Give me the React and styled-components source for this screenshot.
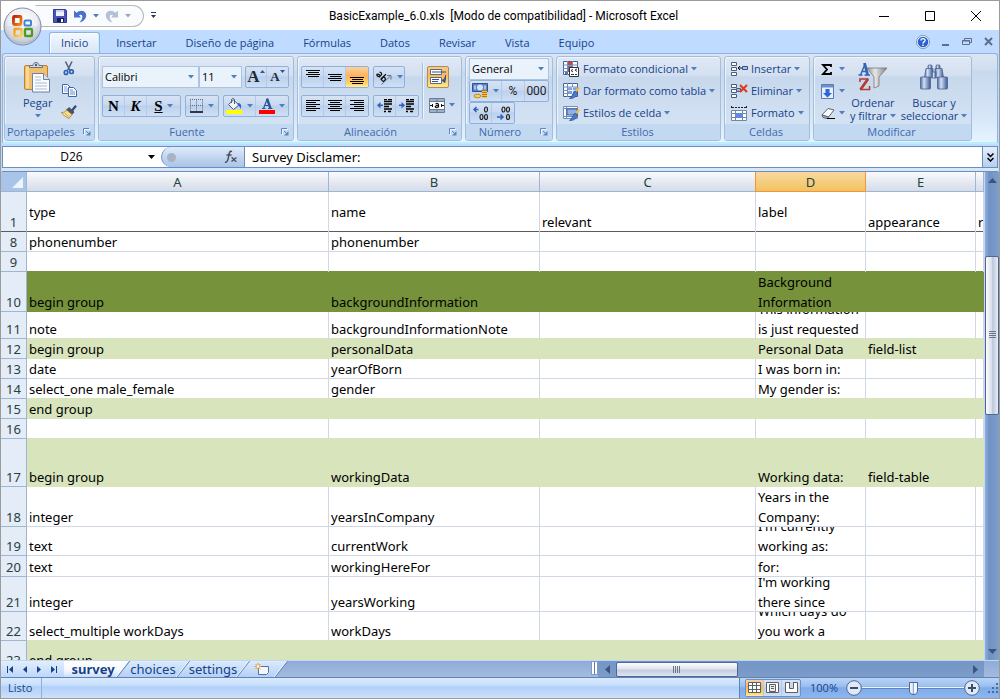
import React from "react";
import styled, { createGlobalStyle, css } from "styled-components";

const UI_FONT = `"Open Sans", "Noto Sans", sans-serif`;
const CELL_FONT = `"Noto Sans", "Open Sans", sans-serif`;

const GlobalStyle = createGlobalStyle`
  *, *::before, *::after { box-sizing: border-box; }
  body { margin: 0; background: #9db5dc; }
  button, input, select { font: inherit; color: inherit; margin: 0; padding: 0; border: 0; background: none; border-radius: 0; }
  button { cursor: pointer; }
  svg { display: block; flex: none; }
`;

const Window = styled.div`
  height: 100vh;
  display: flex;
  flex-direction: column;
  overflow: hidden;
  border: 1px solid #9a9a9a;
  background: #bfdbff;
  font: 11px/16px ${UI_FONT};
  color: #15428b;
`;

/* ---------- title bar ---------- */

const TitleBar = styled.header`
  position: relative;
  display: flex;
  align-items: center;
  height: 29px;
  flex: none;
  background: #fff;
  color: #000;
`;

const TitleSide = styled.div`
  flex: 1;
  display: flex;
  align-items: center;
  justify-content: ${(p) => (p.$end ? "flex-end" : "flex-start")};
  gap: ${(p) => (p.$end ? "34px" : "6px")};
  padding: ${(p) => (p.$end ? "0 17px 0 0" : "0 0 0 34px")};
`;

const Title = styled.h1`
  margin: 0;
  padding-right: 10px;
  font: 12px/16px Roboto, ${UI_FONT};
  white-space: pre;
`;

const OfficeButton = styled.button`
  position: absolute;
  left: 2px;
  top: 6px;
  z-index: 2;
`;

const QuickAccess = styled.div`
  display: flex;
  align-items: center;
  gap: 6px;
  height: 22px;
  padding: 0 12px 0 17px;
  border: 1px solid #b4b9c2;
  border-left-color: transparent;
  border-radius: 0 11px 11px 0;
  background: #fafbfd;
`;

const IconButton = styled.button`
  display: flex;
  align-items: center;
  justify-content: center;
`;

/* ---------- ribbon ---------- */

const TabRow = styled.nav`
  display: flex;
  align-items: flex-end;
  gap: 1px;
  height: 23px;
  flex: none;
  padding: 0 5px 0 48px;
`;

const RibbonTab = styled.button`
  height: 21px;
  padding: 0 14px;
  ${(p) =>
    p.$active &&
    css`
      padding: 0 11px;
      margin-right: 1px;
      border: 1px solid #8db2e3;
      border-bottom: 0;
      border-radius: 3px 3px 0 0;
      background: linear-gradient(#f4f9ff, #e3edf9 60%, #dbe6f4);
      box-shadow: inset 1px 1px #fff, inset -1px 0 #bff4ff;
    `}
`;

const TabTools = styled.div`
  display: flex;
  align-items: center;
  align-self: center;
  gap: 12px;
  margin-left: auto;
`;

const Ribbon = styled.section`
  display: flex;
  gap: 3px;
  flex: none;
  height: 91px;
  margin: 0 1px;
  padding: 2px 1px;
  border: 1px solid #8db2e3;
  border-bottom: 2px solid #bcecff;
  border-radius: 3px;
  background: linear-gradient(#dbe6f4, #cfdeef 18%, #c8d9ee 20%, #d6e6f7 70%, #e5f4ff);
`;

const GroupFrame = styled.section`
  display: flex;
  flex-direction: column;
  flex: none;
  width: ${(p) => p.$width}px;
  height: 85px;
  border: 1px solid #a3bddc;
  border-radius: 3px;
  overflow: hidden;
  background: linear-gradient(#dfe8f5, #d4e0f0 22%, #c8d8ec 24%, #d3e2f3 80%);
  box-shadow: inset 1px 1px rgba(255, 255, 255, 0.6);
`;

const GroupBody = styled.div`
  display: flex;
  flex: 1;
  gap: ${(p) => p.$gap || 0}px;
  padding: ${(p) => p.$pad || "9px 3px 0"};
`;

const GroupLabel = styled.h2`
  display: flex;
  align-items: center;
  gap: 8px;
  height: 16px;
  margin: 0;
  padding: 0 4px 0 2px;
  font: inherit;
  line-height: 16px;
  color: #3e6aaa;
  background: #c2d9f1;
`;

const LabelText = styled.span`
  flex: 1;
  text-align: center;
`;

const Column = styled.div`
  display: flex;
  flex-direction: column;
  align-items: ${(p) => p.$align || "flex-start"};
  gap: ${(p) => p.$gap || 0}px;
  padding-top: ${(p) => p.$top || 0}px;
`;

const Row = styled.div`
  display: flex;
  align-items: center;
  gap: ${(p) => p.$gap || 0}px;
`;

const ButtonStrip = styled.div`
  display: flex;
  height: 22px;
  border: 1px solid #8fb0dc;
  border-radius: 2px;
  background: linear-gradient(#d6e3f4, #c8d9f0 45%, #bbd0ec 50%, #cfe0f5);
`;

const StripButton = styled.button`
  display: flex;
  align-items: center;
  justify-content: center;
  gap: 4px;
  width: ${(p) => p.$w || 22}px;
  height: 20px;
  &:not(:last-child) { border-right: 1px solid #b3cbea; }
  ${(p) => p.$digits && css`color: #222; font-size: 12px; font-family: "Roboto", sans-serif;`}
  ${(p) => p.$on && css`background: linear-gradient(#f9d2a0, #ffb35a 45%, #ffd25f 80%, #ffec9c);`}
`;

const ToggleButton = styled.button`
  display: flex;
  align-items: center;
  justify-content: center;
  width: 22px;
  height: 22px;
  && { border: 1px solid #b58b50; border-radius: 2px; }
  background: linear-gradient(#f6c98e, #fdb75c 40%, #ffd873 80%, #ffe996);
`;

const Divider = styled.span`
  width: 2px;
  height: 56px;
  margin-top: -3px;
  border-left: 1px solid #a3bddc;
  border-right: 1px solid #edf4fc;
`;

const Combo = styled.span`
  display: grid;
  align-items: center;
  width: ${(p) => p.$w}px;
  height: 22px;
  border: 1px solid #abc4e4;
  background: #eaf2fb;
  color: #000;
  > * { grid-area: 1 / 1; }
  select { appearance: none; width: 100%; height: 20px; padding-left: 2px; outline: 0; }
  svg { justify-self: end; margin-right: 4px; pointer-events: none; }
`;

const LineButton = styled.button`
  display: flex;
  align-items: center;
  justify-content: space-between;
  height: 22px;
  min-width: 24px;
  gap: 3px;
  white-space: nowrap;
`;

const BigButton = styled.button`
  display: flex;
  flex-direction: column;
  align-items: center;
  line-height: 13px;
  white-space: nowrap;
`;

const BigIcon = styled.span`
  display: flex;
  align-items: center;
  height: 38px;
`;

const CaretLine = styled.span`
  display: flex;
  align-items: center;
  gap: 3px;
  height: 13px;
`;

/* ---------- formula bar ---------- */

const FormulaBar = styled.section`
  display: flex;
  flex: none;
  height: 22px;
  margin: 2px 1px 0;
  border: 1px solid #6a8fbd;
  background: #fff;
  color: #000;
  font-size: 12px;
`;

const NameBox = styled.div`
  display: flex;
  align-items: center;
  width: 158px;
  padding-right: 6px;
  gap: 8px;
  input { flex: 1; min-width: 0; text-align: center; outline: 0; }
`;

const FunctionPill = styled.div`
  display: flex;
  align-items: center;
  justify-content: space-between;
  width: 84px;
  padding: 0 6px 0 5px;
  border: 1px solid #6a8fbd;
  border-width: 0 1px 0 1px;
  border-radius: 10px 0 0 10px;
  background: linear-gradient(#dfebfa, #c3d6f0 50%, #a9c4ea);
`;

const FormulaInput = styled.input`
  flex: 1;
  min-width: 0;
  && { padding: 0 7px; font: 13px/20px ${CELL_FONT}; outline: 0; }
`;

const ExpandButton = styled(IconButton)`
  width: 15px;
  && { border-left: 1px solid #6a8fbd; background: linear-gradient(#e6f0fc, #b5cef0); }
`;

const FormulaGap = styled.div`
  flex: none;
  height: 4px;
  margin: 0 1px;
  background: #d8e6f7;
  border-bottom: 1px solid #6a8fbd;
`;

/* ---------- grid ---------- */

const SheetArea = styled.main`
  display: flex;
  flex: 1;
  min-height: 0;
`;

const SheetView = styled.div`
  flex: 1;
  min-width: 0;
  overflow: hidden;
  background: #fff;
`;

const Grid = styled.table`
  width: 100%;
  min-width: 982px;
  table-layout: fixed;
  border-collapse: separate;
  border-spacing: 0;
  font: 13px/20px ${CELL_FONT};
  color: #000;
  td, th { padding: 0; font-weight: 400; }
`;

const ColumnHead = styled.th`
  height: 20px;
  color: #27413e;
  border-right: 1px solid #9eb6ce;
  box-shadow: inset 0 -1px #9eb6ce;
  background: linear-gradient(#f9fbfd, #e5e9f1 50%, #d3dbe8);
  ${(p) =>
    p.$selected &&
    css`
      border-color: #f29536;
      background: linear-gradient(#f9d99f, #f1c15f);
      box-shadow: -1px 0 #f29536, inset 0 -1px #f29536;
    `}
`;

const Corner = styled.th`
  border-right: 1px solid #9eb6ce;
  box-shadow: inset 0 -1px #9eb6ce;
  background: #a9c4e9;
  svg { margin: 2px 3px 2px auto; }
`;

const RowHead = styled.th`
  vertical-align: bottom;
  color: #27413e;
  background: #e4ecf7;
  border-right: 1px solid #9eb6ce;
  box-shadow: inset 0 -1px ${(p) => (p.$frozen ? "#5c5c5c" : "#9eb6ce")};
`;

const FILLS = { dark: "#76933c", light: "#d8e4bc" };

const Cell = styled.td`
  background: ${(p) => FILLS[p.$fill] || "#fff"};
  border-right: 1px solid ${(p) => FILLS[p.$fill] || "#d0d7e5"};
  box-shadow: inset 0 -1px ${(p) => (p.$frozen ? "#5c5c5c" : FILLS[p.$fill] || FILLS[p.$below] || "#d0d7e5")};
`;

const CellText = styled.div`
  display: flex;
  align-items: ${(p) => (p.$middle ? "center" : "flex-end")};
  height: ${(p) => p.$h}px;
  padding-left: 2px;
  overflow: hidden;
  white-space: pre;
`;

const VScroll = styled.div`
  display: flex;
  flex-direction: column;
  flex: none;
  width: 15px;
  border-left: 1px solid #c3d7f2;
  background: linear-gradient(90deg, #8fb0e0, #6f92c2 30%, #7f9fcc);
`;

const VTrack = styled.div`
  flex: 1;
  display: flex;
  flex-direction: column;
  &::before { content: ""; flex: 67; }
  &::after { content: ""; flex: 229; }
`;

const VThumb = styled.div`
  flex: 158;
  display: flex;
  align-items: center;
  justify-content: center;
  border: 1px solid #4e6797;
  border-radius: 2px;
  background: linear-gradient(90deg, #fdfdfe, #d5dbe8 50%, #bcc7db 55%, #e8edf5);
`;

const ScrollButton = styled(IconButton)`
  flex: none;
  width: ${(p) => p.$w || 15}px;
  height: 17px;
`;

/* ---------- sheet tabs ---------- */

const TabStrip = styled.footer`
  display: flex;
  flex: none;
  height: 17px;
  padding-right: 15px;
  border-top: 1px solid #c3d7f2;
  background: linear-gradient(#8fabd8, #a3bbdf);
`;

const SheetNav = styled.div`
  display: flex;
  align-items: center;
  justify-content: space-around;
  width: 63px;
  padding: 0 1px;
  background: linear-gradient(#e2eefc, #bdd7fa);
`;

const SheetTabs = styled.div`
  display: flex;
  overflow: hidden;
  padding-right: 10px;
`;

const SheetTab = styled.button`
  position: relative;
  width: ${(p) => p.$w || 60}px;
  height: 16px;
  z-index: ${(p) => (p.$active ? 1 : 0)};
  && { padding-right: 2px; font: ${(p) => (p.$active ? 700 : 400)} 13px/16px ${CELL_FONT}; }
  &::before {
    content: "";
    position: absolute;
    inset: 0 0 0 ${(p) => (p.$active ? "-12px" : "0")};
    border-right: 1px solid #5f85bd;
    transform: skewX(-38deg);
    background: ${(p) => (p.$active ? "linear-gradient(#fff, #f4f8fe 60%, #c9dcf5)" : "linear-gradient(#dcebfd, #b4d0f6)")};
    box-shadow: inset -1px 0 #fff;
  }
  > span { position: relative; display: flex; justify-content: center; }
`;

const SplitHandle = styled.span`
  flex: none;
  width: 7px;
  height: 14px;
  margin-left: auto;
  border: 1px solid #7b9bca;
  background: linear-gradient(90deg, #fff 2px, #5f7eb0 2px, #5f7eb0 3px, #fff 3px);
`;

const HScroll = styled.div`
  display: flex;
  align-items: center;
  flex: 0 1 386px;
  background: linear-gradient(#7496c6, #7c9cc8);
`;

const HTrack = styled.div`
  flex: 1;
  display: flex;
  &::after { content: ""; flex: 229; }
`;

const HThumb = styled.div`
  flex: 121;
  height: 15px;
  display: flex;
  align-items: center;
  justify-content: center;
  border: 1px solid #4e6797;
  border-radius: 2px;
  background: linear-gradient(#fdfdfe, #dfe4ee 45%, #c3ccdd 55%, #dfe5f0);
`;

const Grip = styled.span`
  width: ${(p) => (p.$vertical ? 7 : 8)}px;
  height: ${(p) => (p.$vertical ? 8 : 7)}px;
  background: repeating-linear-gradient(${(p) => (p.$vertical ? "180deg" : "90deg")}, #6f7683 0 1px, transparent 1px 2px);
`;

/* ---------- status bar ---------- */

const StatusBar = styled.footer`
  display: flex;
  align-items: center;
  flex: none;
  height: 21px;
  border-top: 1px solid #5f83b8;
  background: linear-gradient(#dcebfe, #c6defc 35%, #b1d0f8 45%, #cce0fb);
`;

const StatusText = styled.span`
  align-self: stretch;
  display: flex;
  align-items: center;
  padding: 0 9px 0 7px;
  border-right: 1px solid #8cb0e2;
`;

const StatusTools = styled.div`
  display: flex;
  align-items: center;
  align-self: stretch;
  margin-left: auto;
  padding-left: 5px;
  border-left: 1px solid #5f83b8;
  background: linear-gradient(#b9d3f7, #9dc0f0 40%, #80acea 50%, #8fb5ee);
`;

const ViewStrip = styled(ButtonStrip)`
  height: 18px;
  margin-right: 9px;
  border-color: #6c90c6;
`;

const ViewButton = styled(StripButton)`
  width: 18px;
  height: 16px;
`;

const ZoomRange = styled.input`
  appearance: none;
  width: 102px;
  height: 18px;
  margin: 0;
  && { background: linear-gradient(transparent 8px, #e9f2fd 8px, #e9f2fd 9px, #6186bd 9px, #6186bd 10px, transparent 10px); }
  &::-webkit-slider-thumb {
    appearance: none;
    width: 9px;
    height: 13px;
    border: 1px solid #4a689e;
    border-radius: 1px 1px 5px 5px;
    background: linear-gradient(90deg, #fff, #d2def0 40%, #8fa8cf 50%, #f4f8fd 60%);
  }
`;

/* ---------- icons ---------- */

const Caret = ({ color = "#4f7fbe" }) => (
  <svg width="6" height="4" viewBox="0 0 6 4" aria-hidden="true"><path d="M0 0h6L3 3.500z" fill={color} /></svg>
);

const Launcher = () => (
  <svg width="8" height="8" viewBox="0 0 8 8" aria-hidden="true">
    <path d="M.5 6V.5H6" fill="none" stroke="#5f87bf" />
    <path d="M3 3l3 3" stroke="#5f87bf" />
    <path d="M7.500 3v4.500H3z" fill="#5f87bf" />
    <path d="M1.500 7V1.500H7" fill="none" stroke="#fff" opacity=".7" />
  </svg>
);

const OfficeLogo = () => (
  <svg width="39" height="39" viewBox="0 0 39 39" aria-hidden="true">
    <defs>
      <radialGradient id="orb" cx=".5" cy=".35" r=".7">
        <stop offset="0" stopColor="#fff" /><stop offset=".55" stopColor="#eceef3" /><stop offset=".85" stopColor="#b4bccb" /><stop offset="1" stopColor="#edf2fa" />
      </radialGradient>
      <linearGradient id="red" x2="1" y2="1"><stop stopColor="#b82406" /><stop offset="1" stopColor="#f78a1c" /></linearGradient>
      <linearGradient id="yel" x2="1" y2="1"><stop stopColor="#f69a15" /><stop offset="1" stopColor="#fcd64e" /></linearGradient>
    </defs>
    <circle cx="19.500" cy="19.500" r="18.500" fill="url(#orb)" stroke="#7f8aa0" />
    <path d="M3 20c10-3 23-3 33 0-1 9-7 15-16.500 15S4 29 3 20z" fill="#cfd4de" opacity=".5" />
    <rect x="10.500" y="9.500" width="7.500" height="8" rx="1" fill="none" stroke="url(#red)" strokeWidth="2.800" />
    <rect x="21.500" y="13.500" width="6.500" height="5" rx="1" fill="none" stroke="#3c86d2" strokeWidth="2" />
    <rect x="11.500" y="22" width="7" height="7" rx="1" fill="none" stroke="url(#yel)" strokeWidth="2.400" />
    <rect x="22" y="22" width="7" height="7" rx="1" fill="none" stroke="#4f9a28" strokeWidth="2.400" />
    <path d="M18.500 18.500h2.500v2.500h-2.500z" fill="#f4f5f8" />
  </svg>
);

const SaveIcon = () => (
  <svg width="14" height="14" viewBox="0 0 14 14" aria-hidden="true">
    <path d="M.5.5h12l1 1v12H.5z" fill="#4a55b8" stroke="#323c98" />
    <path d="M3 1h8v6H3z" fill="#eef2fb" /><path d="M3 1h8v2H3z" fill="#c9d4ef" />
    <path d="M4 9h7v4H4z" fill="#161c55" /><path d="M8 10h2v3H8z" fill="#fff" />
  </svg>
);

const UndoIcon = ({ flip, color = "#4a72cc" }) => (
  <svg width="14" height="14" viewBox="0 0 14 14" aria-hidden="true">
    <g transform={flip ? "translate(14 0) scale(-1 1)" : undefined}>
      <path d="M1 1.500v7h7L6 6.300c1.800-1.300 3.300-.6 3.300 1.400 0 2.200-1.200 3.600-2.800 5.800 4-1.200 6.700-3.800 6.700-7.300C13.200 1.300 7 .3 3.500 3.800z" fill={color} />
    </g>
  </svg>
);

const PasteIcon = () => (
  <svg width="27" height="31" viewBox="0 0 27 31" aria-hidden="true">
    <rect x=".5" y="3.500" width="23" height="24" rx="1.500" fill="#f2bf6d" stroke="#b98235" />
    <path d="M2 5h3v21H2z" fill="#f9d79b" />
    <path d="M5.500 5.500h13v-2h-3.500c0-4-6-4-6 0H5.500z" fill="#d6dae2" stroke="#6d7480" />
    <circle cx="12" cy="3" r="1.200" fill="#555c68" />
    <path d="M8.500 11.500h11l6 6v12.500h-17z" fill="#fbfcfe" stroke="#6b81a8" />
    <path d="M19.500 11.500v6h6" fill="#d9e2f0" stroke="#6b81a8" />
    <path d="M11 15h6M11 18h6M11 21h12M11 24h12M11 27h12" stroke="#a9bad6" />
  </svg>
);

const CutIcon = () => (
  <svg width="12" height="15" viewBox="0 0 12 15" aria-hidden="true">
    <path d="M2.500.5l4.500 9M9 .5L4.500 9.500" stroke="#55627c" strokeWidth="1.600" fill="none" />
    <ellipse cx="3" cy="11.500" rx="1.700" ry="2" fill="none" stroke="#2f62b8" strokeWidth="1.700" />
    <ellipse cx="8.500" cy="10.700" rx="1.800" ry="1.800" fill="none" stroke="#2f62b8" strokeWidth="1.700" />
  </svg>
);

const CopyIcon = () => (
  <svg width="15" height="13" viewBox="0 0 15 13" aria-hidden="true">
    <path d="M.5.5h5l3 3v6h-8z" fill="#fff" stroke="#3f66ad" /><path d="M2 3h3M2 5h5M2 7h5" stroke="#7c9fdc" />
    <path d="M6.500 3.500h5l3 3v6h-8z" fill="#fff" stroke="#3f66ad" /><path d="M8 6h3M8 8h5M8 10h5" stroke="#5c88d6" />
  </svg>
);

const BrushIcon = () => (
  <svg width="16" height="14" viewBox="0 0 16 14" aria-hidden="true">
    <path d="M15 .8L11 5.500" stroke="#3a4a80" strokeWidth="2.400" />
    <path d="M8 2.500l5 4.500-2 2.500L5.500 5z" fill="#4c5468" stroke="#39404f" strokeWidth=".8" />
    <path d="M5.500 5l5.500 4.500L8 13.500C5 12 2 10 .5 7.500 2.500 7.500 4.500 7 5.500 5z" fill="#f6dd8c" stroke="#a97f2b" strokeWidth=".8" />
    <path d="M3.500 8l4.500 4" stroke="#c9a353" strokeWidth=".8" />
  </svg>
);

const Letter = styled.span`
  font: ${(p) => (p.$italic ? "italic " : "")}700 ${(p) => p.$size || 15}px/16px "Liberation Serif", serif;
  color: ${(p) => p.$color || "#000"};
  text-decoration: ${(p) => (p.$under ? "underline" : "none")};
`;

const SizeLetter = ({ up }) => (
  <Row>
    <Letter $size={up ? 17 : 13} $color="#222a38">A</Letter>
    <svg width="5" height="14" viewBox="0 0 5 14" aria-hidden="true">
      <path d={up ? "M0 3h5L2.500 0z" : "M0 0h5L2.500 3z"} fill="#2f5597" />
    </svg>
  </Row>
);

const BordersIcon = () => (
  <svg width="14" height="14" viewBox="0 0 14 14" aria-hidden="true">
    <path d="M.5.500v11M6.500.5v11M12.500.5v11M0 .5h13M0 6.500h13" stroke="#5b6b85" strokeDasharray="1 1" />
    <path d="M0 13h13" stroke="#000" strokeWidth="1.500" />
  </svg>
);

const FillIcon = () => (
  <svg width="17" height="16" viewBox="0 0 17 16" aria-hidden="true">
    <path d="M2.500 6.500L7.500 2l5.500 5-5.500 4.500z" fill="#f0f4fb" stroke="#4a5a7c" />
    <path d="M5.500 5V2c0-2 3-2 3 0v4" fill="none" stroke="#4a5a7c" />
    <path d="M12 5c3 0 4 3 2.500 6-.5-2-1-3-3-4z" fill="#2f62b8" />
    <path d="M0 12h16v4H0z" fill="#ff0" />
  </svg>
);

const FontColorIcon = () => (
  <svg width="16" height="16" viewBox="0 0 16 16" aria-hidden="true">
    <path d="M3 10.500h3.500M9 10.500h4.500M4.500 10.500l3.500-9M6 7.500h4.500" fill="none" stroke="#2f5597" strokeWidth="1.200" />
    <path d="M8 .5l3.500 10" stroke="#2f5597" strokeWidth="2.400" />
    <path d="M0 12h16v4H0z" fill="red" />
  </svg>
);

const ALIGN_LINES = {
  top: [[0, 14, 0], [2, 11, 2], [0, 14, 4], [2, 11, 6]],
  middle: [[0, 14, 4], [2, 11, 6], [0, 14, 8], [2, 11, 10]],
  bottom: [[0, 14, 7], [2, 11, 9], [0, 14, 11], [2, 11, 13]],
  left: [[0, 14, 1], [0, 10, 3], [0, 14, 5], [0, 10, 7], [0, 14, 9], [0, 10, 11]],
  center: [[0, 14, 1], [2, 10, 3], [0, 14, 5], [2, 10, 7], [0, 14, 9], [2, 10, 11]],
  right: [[0, 14, 1], [4, 10, 3], [0, 14, 5], [4, 10, 7], [0, 14, 9], [4, 10, 11]],
};

const AlignIcon = ({ kind }) => (
  <svg width="14" height="14" viewBox="0 0 14 14" aria-hidden="true">
    {ALIGN_LINES[kind].map(([x, w, y]) => <rect key={y} x={x} y={y} width={w} height="1" fill="#000" />)}
  </svg>
);

const IndentIcon = ({ more }) => (
  <svg width="16" height="14" viewBox="0 0 16 14" aria-hidden="true">
    <path d="M7 .5h3M11 .5h4M7 2.500h8M7 5h8M7 7.500h5M7 10h8M7 12.500h2M11 12.500h3" stroke="#000" strokeWidth="1.400" />
    <path d={more ? "M0 5.500h2.500V3L6 6.300 2.500 9.500V7H0z" : "M6 5.500H3.500V3L0 6.300l3.500 3.200V7H6z"} fill="#2f62b8" />
  </svg>
);

const OrientIcon = () => (
  <svg width="17" height="15" viewBox="0 0 17 15" aria-hidden="true">
    <g transform="rotate(45 6 6)" fill="none" stroke="#111" strokeWidth="1.300">
      <path d="M1.500 5c1.500-1.200 3.300-.6 3.300 1v3.200M4.800 7C1 6.500.5 9.200 2.500 9.200c1.300 0 2.300-.8 2.300-2.200M7.500 2v7.500" />
      <ellipse cx="9.300" cy="7.200" rx="1.800" ry="2" />
    </g>
    <path d="M5.500 14.500L14.500 6M11 5.500h4v4" stroke="#66728a" fill="none" />
  </svg>
);

const WrapIcon = () => (
  <svg width="17" height="16" viewBox="0 0 17 16" aria-hidden="true">
    <path d="M.5.500h11v5H.5zM.5 8.500h11v6H.5z" fill="#fff" stroke="#5b6b85" />
    <path d="M2 3h14M2 10.500h7M2 12.500h6" stroke="#2f5597" />
    <path d="M15.500 6v5h-2M15 9l-3 2.500 3 2z" stroke="#2f5597" fill="#2f5597" />
  </svg>
);

const MergeIcon = () => (
  <svg width="16" height="15" viewBox="0 0 16 15" aria-hidden="true">
    <path d="M.5.5h15v14H.5z" fill="#fff" stroke="#6d7c95" />
    <path d="M1 1h14v2.500H1zM1 11.500h14V14H1z" fill="#9fb0ca" /><path d="M8 .5v3M8 11.500v3M1 3.500h14M1 11.500h14" stroke="#6d7c95" />
    <path d="M1 7.500h3M12 7.500h3M3.500 6v3M12.500 6v3" stroke="#111" />
    <path d="M6.500 6c2-1 3-.5 3 .8V9.500M9.500 7.500c-4-.3-4 2.500-1.500 2 .8 0 1.500-.8 1.500-2" fill="none" stroke="#111" strokeWidth="1.200" />
  </svg>
);

const MoneyIcon = () => (
  <svg width="17" height="16" viewBox="0 0 17 16" aria-hidden="true">
    <path d="M.5.5h15v8H.5z" fill="#5d82c6" stroke="#31508f" /><ellipse cx="8" cy="4.500" rx="3" ry="3" fill="#d5e2f8" />
    <path d="M2 2.500h2v4H2zM12 2.500h2v4h-2z" fill="#a9c0ea" />
    <path d="M10 7h5v8h-5z" fill="#f5c242" /><path d="M10 7.500h5M10 9.500h5M10 11.500h5M10 13.500h5M2 13.500h6" stroke="#b87a10" />
    <ellipse cx="5.500" cy="13" rx="3.500" ry="1.800" fill="#f7cf58" stroke="#b87a10" strokeWidth=".8" />
  </svg>
);

const DecimalIcon = ({ more }) => (
  <svg width="18" height="15" viewBox="0 0 18 15" aria-hidden="true">
    <g fill="none" stroke="#222" strokeWidth="1.200">
      <ellipse cx="14" cy="3.500" rx="1.500" ry="2.500" />
      {!more && <ellipse cx="9.500" cy="3.500" rx="1.500" ry="2.500" />}
      <ellipse cx="14" cy="11" rx="1.500" ry="2.500" />
      {more && <ellipse cx="9.500" cy="11" rx="1.500" ry="2.500" />}
    </g>
    {more ? <path d="M6.500 3.500H2M4.500 1L2 3.500 4.500 6" stroke="#2f62b8" strokeWidth="1.500" fill="none" />
      : <path d="M3 11h6M6.500 8.500L9 11l-2.500 2.500" stroke="#2f62b8" strokeWidth="1.500" fill="none" />}
  </svg>
);

const TableBase = () => (
  <>
    <path d="M.5.500h14v13H.5z" fill="#fff" stroke="#44608f" />
    <path d="M0 4h15M0 7.500h15M0 10.500h15M4.500 0v14M9.500 0v14" stroke="#6d8cc0" />
  </>
);

const BrushTip = () => (
  <>
    <path d="M16 4.500l-4 5" stroke="#f0b83c" strokeWidth="2.200" />
    <path d="M12 8l2.500 2c-1 4-4 5.500-8 5.500 3-2 3-5 5.500-7.500z" fill="#4a7ad0" stroke="#2f55a0" strokeWidth=".8" />
  </>
);

const ConditionalIcon = () => (
  <svg width="17" height="16" viewBox="0 0 17 16" aria-hidden="true">
    <TableBase />
    <path d="M5 1h4v3H5zM5 8h3v3H5z" fill="#d8402a" /><path d="M5 4.500h4v3H5zM2 11h3v2H2z" fill="#4a74c4" />
    <path d="M6.500 6.500h9v9h-9z" fill="#fff" stroke="#333" /><path d="M10 8.500l-2 1 2 1.500M8 13.500h3M14 8l-2 1 2 1.500M12 13.500h2" stroke="#333" fill="none" />
  </svg>
);

const FormatTableIcon = () => (
  <svg width="17" height="16" viewBox="0 0 17 16" aria-hidden="true">
    <TableBase /><path d="M5 4.500h9v6H5z" fill="#7ea2e2" /><path d="M5 7.500h9M9.500 4v7" stroke="#dfe9fb" /><BrushTip />
  </svg>
);

const CellStyleIcon = () => (
  <svg width="17" height="16" viewBox="0 0 17 16" aria-hidden="true">
    <path d="M.5 1.500h14v12H.5z" fill="#fff" stroke="#6d8cc0" /><path d="M0 3.500h15M3.500 1v13M0 11.500h14" stroke="#6d8cc0" />
    <path d="M4 4h10v6H4z" fill="#8fb0ea" stroke="#44608f" /><BrushTip />
  </svg>
);

const CellsIcon = ({ remove }) => (
  <svg width="17" height="15" viewBox="0 0 17 15" aria-hidden="true">
    <path d="M.5.5h5v3h-5zM.5 5.500h5v3h-5zM.5 10.500h5v3h-5z" fill="#fff" stroke="#4a5c7c" />
    {remove ? (
      <>
        <path d="M5.500 4.500h4v3h-4z" fill="#9fb8e4" stroke="#4a5c7c" />
        <path d="M9 1l7 7M16 1L9 8" stroke="#e23c1f" strokeWidth="2.200" />
      </>
    ) : (
      <>
        <path d="M7 6h4M9 4L7 6l2 2" stroke="#111" fill="none" />
        <path d="M11.500 4.500h5v3h-5z" fill="#a9c0ea" stroke="#2f4f90" />
      </>
    )}
  </svg>
);

const FormatCellsIcon = () => (
  <svg width="17" height="16" viewBox="0 0 17 16" aria-hidden="true">
    <path d="M.5 1v3M15.500 1v3M1 2.500h14" stroke="#222" strokeDasharray="2 1" />
    <path d="M.5 5.500h15v10H.5z" fill="#fff" stroke="#7187ad" /><path d="M4.500 5v11M11.500 5v11M0 8.500h16M0 12.500h16" stroke="#7187ad" />
    <path d="M5 8.500h6.500v4H5z" fill="#5c8be8" />
  </svg>
);

const SumIcon = () => (
  <svg width="12" height="11" viewBox="0 0 12 11" aria-hidden="true">
    <path d="M10 3V1H2l4 4.500L2 10h8V8" fill="none" stroke="#000" strokeWidth="1.800" />
  </svg>
);

const FillDownIcon = () => (
  <svg width="13" height="15" viewBox="0 0 13 15" aria-hidden="true">
    <path d="M.5.5h12v14H.5z" fill="#e6eefb" stroke="#5d7bb0" /><path d="M1 1h11v2.500H1z" fill="#6d8fd0" />
    <path d="M4.500 5h4v4H11l-4.500 4.500L2 9h2.500z" fill="#2c66d8" />
  </svg>
);

const EraserIcon = () => (
  <svg width="14" height="12" viewBox="0 0 14 12" aria-hidden="true">
    <path d="M1 8l6-6.500 6 1.500-5.500 7z" fill="#fff" stroke="#5d6575" /><path d="M1 8l6.500 2L6 11.500 2 10.500z" fill="#aab3c4" stroke="#5d6575" />
    <path d="M6 11.500h8" stroke="#000" />
  </svg>
);

const SortFilterIcon = () => (
  <svg width="30" height="30" viewBox="0 0 30 30" aria-hidden="true">
    <defs><linearGradient id="funnel"><stop stopColor="#8d8f93" /><stop offset=".4" stopColor="#e8e8ea" /><stop offset="1" stopColor="#7c7e82" /></linearGradient></defs>
    <path d="M9 6h20l-8 9v9l-5 2V15z" fill="url(#funnel)" stroke="#77797d" strokeWidth=".8" />
    <path d="M.5 13h4M6.500 13H12M2.500 13L7 2M4 9.500h5" fill="none" stroke="#3563b5" strokeWidth="1.400" />
    <path d="M6.500 1l3.200 12" stroke="#3563b5" strokeWidth="2.800" />
    <path d="M2 20v-3h8.500M2 27.500h9.500v-3.500" fill="none" stroke="#b23c34" strokeWidth="1.600" />
    <path d="M10 17L2.500 27.500" stroke="#b23c34" strokeWidth="2.800" />
  </svg>
);

const BinocularsIcon = () => (
  <svg width="28" height="26" viewBox="0 0 28 26" aria-hidden="true">
    <defs><linearGradient id="lens"><stop stopColor="#4a6aa8" /><stop offset=".35" stopColor="#d3e0f7" /><stop offset="1" stopColor="#3b5a90" /></linearGradient></defs>
    <g fill="url(#lens)" stroke="#4d6390" strokeWidth=".8">
      <rect x="8" y="1" width="4" height="4" rx="1" /><rect x="16" y="1" width="4" height="4" rx="1" />
      <path d="M6 4.500h7v9H4.500z" /><path d="M15 4.500h7l1.500 9H15z" />
      <rect x=".5" y="13" width="10" height="12" rx="1" /><rect x="17.500" y="13" width="10" height="12" rx="1" />
      <rect x="12" y="8" width="4" height="6" />
    </g>
  </svg>
);

const HelpIcon = () => (
  <svg width="14" height="14" viewBox="0 0 14 14" aria-hidden="true">
    <circle cx="7" cy="7" r="6.500" fill="#fff" stroke="#7c94bd" /><circle cx="7" cy="7" r="5.300" fill="#2b62d0" />
    <path d="M5 5.500C5 3 9 3 9 5.400 9 7 7 6.800 7 8.500M7 9.600v1.500" fill="none" stroke="#fff" strokeWidth="1.400" />
  </svg>
);

const Shape = ({ w, h, d, stroke = "none", fill = "none", sw = 1 }) => (
  <svg width={w} height={h} viewBox={`0 0 ${w} ${h}`} aria-hidden="true"><path d={d} stroke={stroke} fill={fill} strokeWidth={sw} /></svg>
);

const FxIcon = () => (
  <svg width="14" height="14" viewBox="0 0 14 14" aria-hidden="true">
    <path d="M8 1.500C5.500.5 5.200 3 4.700 6S3.500 13 1 12M2.500 5h5" fill="none" stroke="#4d4f55" strokeWidth="1.500" />
    <path d="M7.500 7.500c2 0 2.500 4 5 4M12.500 7.500l-5 4" fill="none" stroke="#4d4f55" strokeWidth="1.400" />
  </svg>
);

const NewSheetIcon = () => (
  <svg width="16" height="14" viewBox="0 0 16 14" aria-hidden="true">
    <path d="M4.500 4.500h10v6l-2 2h-8z" fill="#f3f6fc" stroke="#54719f" /><path d="M4 1v7M.5 4.500h7M1.500 2l5 5M6.500 2l-5 5" stroke="#e39b26" />
    <circle cx="4" cy="4.500" r="1.200" fill="#fff" />
  </svg>
);

const ViewIcon = ({ kind }) => (
  <svg width="13" height="12" viewBox="0 0 13 12" aria-hidden="true">
    <path d="M.5.500h12v10H.5z" fill="#fff" stroke="#5c5f66" />
    {kind === "normal" && <path d="M0 3.500h13M0 7.500h13M4.500 0v11M8.500 0v11" stroke="#5c5f66" />}
    {kind === "layout" && <path d="M3.500 2.500h6v7h-6zM5 4.500h3M5 6.500h3" stroke="#5c5f66" fill="#e9edf3" />}
    {kind === "break" && <path d="M4.500 0v6.500h4V0" stroke="#5c5f66" fill="#cfd6e2" />}
  </svg>
);

const ZoomIcon = ({ plus }) => (
  <svg width="16" height="16" viewBox="0 0 16 16" aria-hidden="true">
    <circle cx="8" cy="8" r="7.300" fill="#dfe9f8" stroke="#50688f" />
    <path d={plus ? "M4 8h8M8 4v8" : "M4 8h8"} stroke="#3d4d68" strokeWidth="2" />
  </svg>
);

const ResizeGrip = () => (
  <svg width="11" height="11" viewBox="0 0 11 11" aria-hidden="true">
    <path d="M8 0h2v2H8zM4 4h2v2H4zM8 4h2v2H8zM0 8h2v2H0zM4 8h2v2H4zM8 8h2v2H8z" fill="#4d6c9e" />
  </svg>
);

/* ---------- parts ---------- */

const Group = ({ title, width, launcher, pad, gap, children }) => (
  <GroupFrame $width={width} aria-label={title}>
    <GroupBody $pad={pad} $gap={gap}>{children}</GroupBody>
    <GroupLabel>
      <LabelText>{title}</LabelText>
      {launcher && <IconButton aria-label={`Opciones de ${title}`}><Launcher /></IconButton>}
    </GroupLabel>
  </GroupFrame>
);

const MenuLine = ({ icon, text }) => (
  <LineButton>{icon}<span>{text}</span><Caret /></LineButton>
);

const Select = ({ label, value, width }) => (
  <Combo $w={width}>
    <select aria-label={label} defaultValue={value}><option>{value}</option></select>
    <Caret />
  </Combo>
);

const TABS = ["Inicio", "Insertar", "Diseño de página", "Fórmulas", "Datos", "Revisar", "Vista", "Equipo"];

const COLUMNS = [["A", 302], ["B", 211], ["C", 216], ["D", 110], ["E", 110], ["", null]];

const ROWS = [
  { n: 1, h: 40, cells: ["type", "name", "relevant", "label", "appearance", "required"], middle: [0, 1, 3], frozen: true },
  { n: 8, h: 20, cells: ["phonenumber", "phonenumber"] },
  { n: 9, h: 20, cells: [] },
  { n: 10, h: 40, fill: "dark", cells: ["begin group", "backgroundInformation", "", "Background\nInformation"] },
  { n: 11, h: 27, cells: ["note", "backgroundInformationNote", "", "This information\nis just requested"] },
  { n: 12, h: 20, fill: "light", cells: ["begin group", "personalData", "", "Personal Data", "field-list"] },
  { n: 13, h: 20, cells: ["date", "yearOfBorn", "", "I was born in:"] },
  { n: 14, h: 20, cells: ["select_one male_female", "gender", "", "My gender is:"] },
  { n: 15, h: 20, fill: "light", cells: ["end group"] },
  { n: 16, h: 20, cells: [] },
  { n: 17, h: 48, fill: "light", cells: ["begin group", "workingData", "", "Working data:", "field-table"] },
  { n: 18, h: 40, cells: ["integer", "yearsInCompany", "", "Years in the\nCompany:"] },
  { n: 19, h: 29, cells: ["text", "currentWork", "", "I'm currently\nworking as:"] },
  { n: 20, h: 21, cells: ["text", "workingHereFor", "", "for:"] },
  { n: 21, h: 35, cells: ["integer", "yearsWorking", "", "I'm working\nthere since"] },
  { n: 22, h: 29, cells: ["select_multiple workDays", "workDays", "", "Which days do\nyou work a"] },
  { n: 23, h: 29, fill: "light", cells: ["end group"] },
];

const Spreadsheet = () => (
  <Grid>
    <colgroup>
      <col style={{ width: 26 }} />
      {COLUMNS.map(([name, w]) => <col key={name} style={w ? { width: w } : undefined} />)}
    </colgroup>
    <thead>
      <tr>
        <Corner aria-label="Seleccionar todo"><Shape w={11} h={11} d="M11 0v11H0z" fill="#eef4fc" /></Corner>
        {COLUMNS.map(([name]) => <ColumnHead key={name} $selected={name === "D"}>{name}</ColumnHead>)}
      </tr>
    </thead>
    <tbody>
      {ROWS.map((row, i) => (
        <tr key={row.n}>
          <RowHead $frozen={row.frozen}>{row.n}</RowHead>
          {COLUMNS.map(([name], c) => (
            <Cell key={name} $fill={row.fill} $below={ROWS[i + 1]?.fill} $frozen={row.frozen}>
              <CellText $h={row.h} $middle={row.middle?.includes(c)}>{row.cells[c]}</CellText>
            </Cell>
          ))}
        </tr>
      ))}
    </tbody>
  </Grid>
);

export default function App() {
  return (
    <>
      <GlobalStyle />
      <Window>
        <TitleBar>
          <OfficeButton aria-label="Botón de Office"><OfficeLogo /></OfficeButton>
          <TitleSide>
            <QuickAccess>
              <IconButton aria-label="Guardar"><SaveIcon /></IconButton>
              <IconButton aria-label="Deshacer"><UndoIcon /></IconButton>
              <Caret />
              <IconButton aria-label="Rehacer"><UndoIcon flip color="#b3c0d8" /></IconButton>
              <Caret color="#9aa9c2" />
            </QuickAccess>
            <IconButton aria-label="Personalizar"><Shape w={7} h={7} d="M1 0h5v1H1zM1 3h5L3.500 6z" fill="#1f3864" /></IconButton>
          </TitleSide>
          <Title>{"BasicExample_6.0.xls  [Modo de compatibilidad] - Microsoft Excel"}</Title>
          <TitleSide $end>
            <IconButton aria-label="Minimizar"><Shape w={12} h={12} d="M1 6.500h10" stroke="#000" /></IconButton>
            <IconButton aria-label="Maximizar"><Shape w={12} h={12} d="M1.500 1.500h9v9h-9z" stroke="#000" /></IconButton>
            <IconButton aria-label="Cerrar"><Shape w={12} h={12} d="M1 1l10 10M11 1L1 11" stroke="#000" /></IconButton>
          </TitleSide>
        </TitleBar>

        <TabRow>
          {TABS.map((t, i) => <RibbonTab key={t} $active={i === 0}>{t}</RibbonTab>)}
          <TabTools>
            <IconButton aria-label="Ayuda"><HelpIcon /></IconButton>
            <IconButton aria-label="Minimizar libro"><Shape w={8} h={10} d="M0 8h7" stroke="#5d6f8c" sw={2} /></IconButton>
            <IconButton aria-label="Restaurar libro"><Shape w={10} h={8} d="M2.500 2V.500h7v4H8M.5 2.500h7v4h-7zM0 3h8" stroke="#5d6f8c" /></IconButton>
            <IconButton aria-label="Cerrar libro"><Shape w={10} h={10} d="M1 1l7 7M8 1L1 8" stroke="#5d6f8c" sw={2} /></IconButton>
          </TabTools>
        </TabRow>

        <Ribbon>
          <Group title="Portapapeles" width={91} launcher pad="1px 8px 0 18px" gap={9}>
            <BigButton>
              <BigIcon><PasteIcon /></BigIcon>
              <span>Pegar</span>
              <CaretLine><Caret /></CaretLine>
            </BigButton>
            <Column $gap={8} $top={3} $align="center">
              <IconButton aria-label="Cortar"><CutIcon /></IconButton>
              <IconButton aria-label="Copiar"><CopyIcon /></IconButton>
              <IconButton aria-label="Copiar formato"><BrushIcon /></IconButton>
            </Column>
          </Group>

          <Group title="Fuente" width={196} launcher>
            <Column $gap={7}>
              <Row $gap={3}>
                <Row>
                  <Select label="Fuente" value="Calibri" width={97} />
                  <Select label="Tamaño de fuente" value="11" width={43} />
                </Row>
                <ButtonStrip>
                  <StripButton $w={21} aria-label="Aumentar tamaño"><SizeLetter up /></StripButton>
                  <StripButton $w={21} aria-label="Disminuir tamaño"><SizeLetter /></StripButton>
                </ButtonStrip>
              </Row>
              <Row $gap={4}>
                <ButtonStrip>
                  <StripButton aria-label="Negrita"><Letter>N</Letter></StripButton>
                  <StripButton aria-label="Cursiva"><Letter $italic>K</Letter></StripButton>
                  <StripButton $w={33} aria-label="Subrayado"><Letter $under>S</Letter><Caret /></StripButton>
                </ButtonStrip>
                <ButtonStrip><StripButton $w={32} aria-label="Bordes"><BordersIcon /><Caret /></StripButton></ButtonStrip>
                <ButtonStrip>
                  <StripButton $w={32} aria-label="Color de relleno"><FillIcon /><Caret /></StripButton>
                  <StripButton $w={32} aria-label="Color de fuente"><FontColorIcon /><Caret /></StripButton>
                </ButtonStrip>
              </Row>
            </Column>
          </Group>

          <Group title="Alineación" width={165} launcher gap={3}>
            <Column $gap={7}>
              <Row $gap={4}>
                <ButtonStrip>
                  <StripButton aria-label="Alinear arriba"><AlignIcon kind="top" /></StripButton>
                  <StripButton aria-label="Alinear al medio"><AlignIcon kind="middle" /></StripButton>
                  <StripButton aria-label="Alinear abajo" $on><AlignIcon kind="bottom" /></StripButton>
                </ButtonStrip>
                <ButtonStrip><StripButton $w={30} aria-label="Orientación"><OrientIcon /><Caret /></StripButton></ButtonStrip>
              </Row>
              <Row $gap={4}>
                <ButtonStrip>
                  <StripButton aria-label="Alinear a la izquierda"><AlignIcon kind="left" /></StripButton>
                  <StripButton aria-label="Centrar"><AlignIcon kind="center" /></StripButton>
                  <StripButton aria-label="Alinear a la derecha"><AlignIcon kind="right" /></StripButton>
                </ButtonStrip>
                <ButtonStrip>
                  <StripButton aria-label="Disminuir sangría"><IndentIcon /></StripButton>
                  <StripButton aria-label="Aumentar sangría"><IndentIcon more /></StripButton>
                </ButtonStrip>
              </Row>
            </Column>
            <Divider />
            <Column $gap={7}>
              <ToggleButton aria-label="Ajustar texto"><WrapIcon /></ToggleButton>
              <StripButton $w={30} aria-label="Combinar y centrar"><MergeIcon /><Caret /></StripButton>
            </Column>
          </Group>

          <Group title="Número" width={88} launcher pad="1px 3px 0">
            <Column>
              <Select label="Formato de número" value="General" width={80} />
              <ButtonStrip>
                <StripButton $w={32} aria-label="Formato de contabilidad"><MoneyIcon /><Caret /></StripButton>
                <StripButton $w={23} $digits>%</StripButton>
                <StripButton $w={23} $digits>000</StripButton>
              </ButtonStrip>
              <ButtonStrip>
                <StripButton aria-label="Aumentar decimales"><DecimalIcon more /></StripButton>
                <StripButton aria-label="Disminuir decimales"><DecimalIcon /></StripButton>
              </ButtonStrip>
            </Column>
          </Group>

          <Group title="Estilos" width={165} pad="1px 6px 0">
            <Column>
              <MenuLine icon={<ConditionalIcon />} text="Formato condicional" />
              <MenuLine icon={<FormatTableIcon />} text="Dar formato como tabla" />
              <MenuLine icon={<CellStyleIcon />} text="Estilos de celda" />
            </Column>
          </Group>

          <Group title="Celdas" width={86} pad="1px 6px 0">
            <Column>
              <MenuLine icon={<CellsIcon />} text="Insertar" />
              <MenuLine icon={<CellsIcon remove />} text="Eliminar" />
              <MenuLine icon={<FormatCellsIcon />} text="Formato" />
            </Column>
          </Group>

          <Group title="Modificar" width={159} pad="1px 4px 0 7px" gap={5}>
            <Column>
              <LineButton aria-label="Autosuma"><SumIcon /><Caret /></LineButton>
              <LineButton aria-label="Rellenar"><FillDownIcon /><Caret /></LineButton>
              <LineButton aria-label="Borrar"><EraserIcon /><Caret /></LineButton>
            </Column>
            <BigButton>
              <BigIcon><SortFilterIcon /></BigIcon>
              <span>Ordenar</span>
              <CaretLine>y filtrar<Caret /></CaretLine>
            </BigButton>
            <BigButton>
              <BigIcon><BinocularsIcon /></BigIcon>
              <span>Buscar y</span>
              <CaretLine>seleccionar<Caret /></CaretLine>
            </BigButton>
          </Group>
        </Ribbon>

        <FormulaBar>
          <NameBox>
            <input aria-label="Cuadro de nombres" defaultValue="D26" />
            <Shape w={7} h={4} d="M0 0h7L3.500 4z" fill="#000" />
          </NameBox>
          <FunctionPill>
            <Shape w={9} h={9} d="M4.500 0a4.500 4.500 0 1 0 .01 0z" fill="#a9b3c4" />
            <IconButton aria-label="Insertar función"><FxIcon /></IconButton>
          </FunctionPill>
          <FormulaInput aria-label="Barra de fórmulas" defaultValue="Survey Disclamer:" />
          <ExpandButton aria-label="Expandir barra"><Shape w={7} h={9} d="M.5.500l3 3 3-3M.5 5l3 3 3-3" stroke="#000" sw={1.5} /></ExpandButton>
        </FormulaBar>
        <FormulaGap />

        <SheetArea>
          <SheetView><Spreadsheet /></SheetView>
          <VScroll>
            <ScrollButton aria-label="Subir"><Shape w={9} h={5} d="M0 5h9L4.500 0z" fill="#3e5480" /></ScrollButton>
            <VTrack><VThumb><Grip $vertical /></VThumb></VTrack>
            <ScrollButton aria-label="Bajar"><Shape w={9} h={5} d="M0 0h9L4.500 5z" fill="#3e5480" /></ScrollButton>
          </VScroll>
        </SheetArea>

        <TabStrip>
          <SheetNav>
            <IconButton aria-label="Primera hoja"><Shape w={7} h={7} d="M0 0h1v7H0zM6 0v7L2 3.500z" fill="#15428b" /></IconButton>
            <IconButton aria-label="Hoja anterior"><Shape w={5} h={7} d="M4 0v7L0 3.500z" fill="#15428b" /></IconButton>
            <IconButton aria-label="Hoja siguiente"><Shape w={5} h={7} d="M0 0v7l4-3.500z" fill="#15428b" /></IconButton>
            <IconButton aria-label="Última hoja"><Shape w={7} h={7} d="M0 0v7l4-3.500zM5 0h1v7H5z" fill="#15428b" /></IconButton>
          </SheetNav>
          <SheetTabs>
            <SheetTab $active><span>survey</span></SheetTab>
            <SheetTab><span>choices</span></SheetTab>
            <SheetTab><span>settings</span></SheetTab>
            <SheetTab $w={38} aria-label="Insertar hoja"><span><NewSheetIcon /></span></SheetTab>
          </SheetTabs>
          <SplitHandle />
          <HScroll>
            <ScrollButton $w={18} aria-label="Izquierda"><Shape w={5} h={9} d="M5 0v9L0 4.500z" fill="#3e5480" /></ScrollButton>
            <HTrack><HThumb><Grip /></HThumb></HTrack>
            <ScrollButton $w={18} aria-label="Derecha"><Shape w={5} h={9} d="M0 0v9l5-4.500z" fill="#3e5480" /></ScrollButton>
          </HScroll>
        </TabStrip>

        <StatusBar>
          <StatusText>Listo</StatusText>
          <StatusTools>
            <ViewStrip>
              <ViewButton aria-label="Normal" $on><ViewIcon kind="normal" /></ViewButton>
              <ViewButton aria-label="Diseño de página"><ViewIcon kind="layout" /></ViewButton>
              <ViewButton aria-label="Salto de página"><ViewIcon kind="break" /></ViewButton>
            </ViewStrip>
            <Row $gap={8}>
              <span>100%</span>
              <Row>
                <IconButton aria-label="Alejar"><ZoomIcon /></IconButton>
                <ZoomRange type="range" aria-label="Zoom" defaultValue="50" />
                <IconButton aria-label="Acercar"><ZoomIcon plus /></IconButton>
              </Row>
              <ResizeGrip />
            </Row>
          </StatusTools>
        </StatusBar>
      </Window>
    </>
  );
}
